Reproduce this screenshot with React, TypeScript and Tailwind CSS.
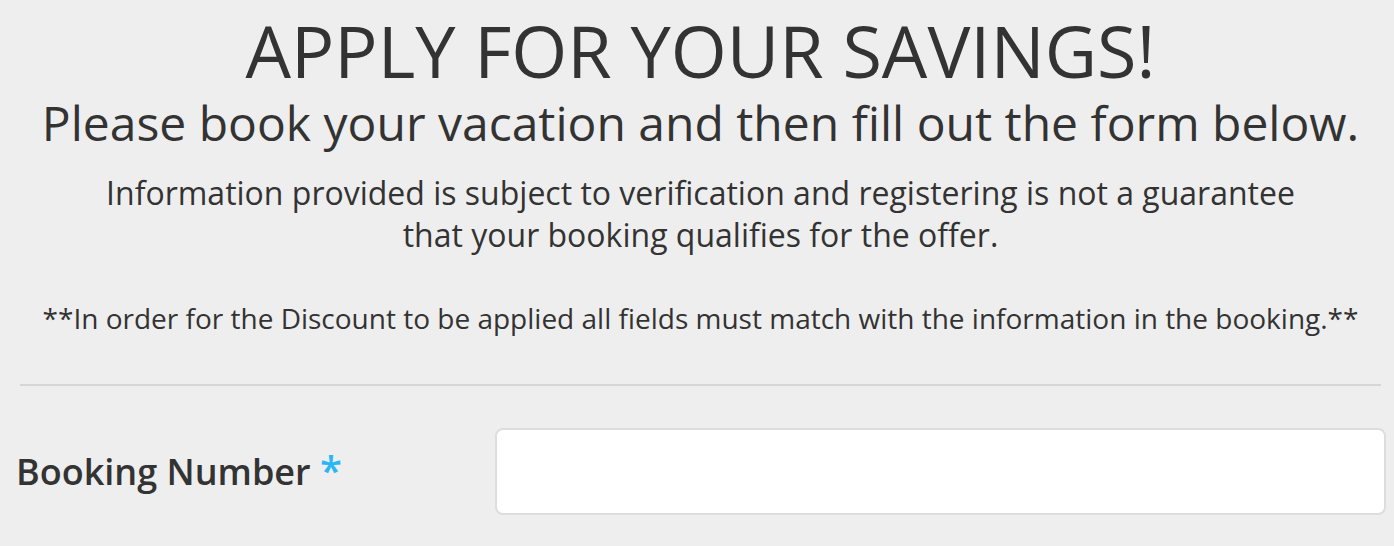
import React from 'react';

const App: React.FC = () => {
  return (
    <div className="min-h-[546px] bg-[#eeeeee] text-[#333333] pl-[20px] pr-[13px] pt-[7px] font-['Open_Sans',sans-serif]">
      <div className="text-center">
        <h1 className="text-[72px] leading-[86px] font-normal">APPLY FOR YOUR SAVINGS!</h1>
        <h2 className="text-[48px] leading-[60px] font-normal">
          Please book your vacation and then fill out the form below.
        </h2>
        <p className="mt-[19px] text-[32px] leading-[42px]">
          Information provided is subject to verification and registering is not a guarantee
          <br />
          that your booking qualifies for the offer.
        </p>
        <p className="mt-[42px] text-[28px] leading-[40px]">
          **In order for the Discount to be applied all fields must match with the information in the booking.**
        </p>
      </div>
      <hr className="mt-[46px] border-0 border-t-2 border-[#d6d6d6]" />
      <div className="mt-[42px] flex items-center">
        <label className="w-[479px] -ml-[4px] shrink-0 text-[36px] leading-[48px] font-semibold">
          Booking Number <span className="text-[#29b6f6] text-[40px] leading-none">*</span>
        </label>
        <input
          type="text"
          className="flex-1 h-[87px] -mr-[5px] bg-white rounded-[8px] border-2 border-[#dddddd] outline-none px-4 text-[28px]"
        />
      </div>
    </div>
  );
};

export default App;
